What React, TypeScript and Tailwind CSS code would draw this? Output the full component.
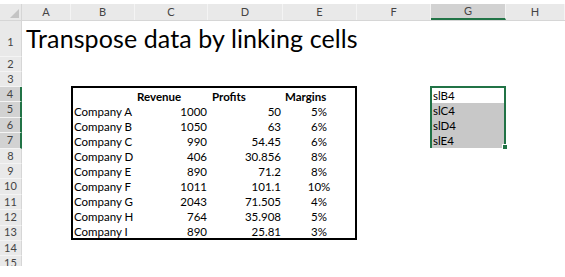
const cols = [
  { label: 'A', w: 'w-[49px]' },
  { label: 'B', w: 'w-[64px]' },
  { label: 'C', w: 'w-[73px]' },
  { label: 'D', w: 'w-[75px]' },
  { label: 'E', w: 'w-[74px]' },
  { label: 'F', w: 'w-[74px]' },
  { label: 'G', w: 'w-[75px]', active: true },
  { label: 'H', w: 'flex-1' },
]

const rows = [
  ['Company A', '1000', '50', '5%'],
  ['Company B', '1050', '63', '6%'],
  ['Company C', '990', '54.45', '6%'],
  ['Company D', '406', '30.856', '8%'],
  ['Company E', '890', '71.2', '8%'],
  ['Company F', '1011', '101.1', '10%'],
  ['Company G', '2043', '71.505', '4%'],
  ['Company H', '764', '35.908', '5%'],
  ['Company I', '890', '25.81', '3%'],
]

const rowHeads = [
  { n: 1, h: 'h-[36px]' },
  { n: 2, h: 'h-[15px]' },
  { n: 3, h: 'h-[15px]' },
  ...[4, 5, 6, 7, 8, 9, 10, 11, 12, 13, 14, 15].map((n) => ({ n, h: 'h-[15.4px]' })),
]

export default function App() {
  return (
    <div className="h-[277px] w-[565px] overflow-hidden bg-white font-['Lato','Liberation_Sans',sans-serif] text-[11px] text-black">
      <div className="h-[4px]" />
      <div className="h-[262px] overflow-hidden">
        {/* column headers */}
        <div className="flex h-[17px] border-b border-[#d6d6d6] bg-[#e9e9e9] text-[#444]">
          <div className="relative w-[22px] border-r border-[#d6d6d6]">
            <svg className="absolute bottom-[2px] right-[2px]" width="9" height="9" viewBox="0 0 9 9">
              <polygon points="9,0 9,9 0,9" fill="#c4c4c4" />
            </svg>
          </div>
          {cols.map((c) => (
            <div
              key={c.label}
              className={[
                c.w,
                'flex items-center justify-center border-r border-[#f4f4f4]',
                c.active ? 'border-b-2 border-b-[#217346] bg-[#d2d2d2]' : '',
              ].join(' ')}
            >
              {c.label}
            </div>
          ))}
        </div>

        <div className="flex">
          {/* row headers */}
          <div className="w-[22px] shrink-0 text-[#444]">
            {rowHeads.map((r) => {
              const active = r.n >= 4 && r.n <= 7
              return (
                <div
                  key={r.n}
                  className={[
                    r.h,
                    'flex items-center justify-center border-b border-[#f4f4f4]',
                    active
                      ? 'border-r-2 border-r-[#217346] bg-[#d2d2d2]'
                      : 'border-r border-r-[#d6d6d6] bg-[#e9e9e9]',
                  ].join(' ')}
                >
                  <span className={r.n === 1 ? 'mt-[8px]' : ''}>{r.n}</span>
                </div>
              )
            })}
          </div>

          {/* sheet */}
          <div className="flex-1">
            <div className="flex h-[36px] items-end pb-[6px] pl-[4px] text-[25px] leading-none tracking-[0.1px]">
              Transpose data by linking cells
            </div>
            <div className="h-[30px]" />

            <div className="flex">
              <div className="w-[49px] shrink-0" />

              <div className="-mt-px h-[154px] w-[286px] shrink-0 border-2 border-black text-[11.5px]">
                <div className="grid h-[15px] grid-cols-[62px_73px_75px_72px] items-center font-bold">
                  <div />
                  <div className="pl-[2px]">Revenue</div>
                  <div className="pl-[4px]">Profits</div>
                  <div className="pl-[2px]">Margins</div>
                </div>
                {rows.map((r) => (
                  <div
                    key={r[0]}
                    className="grid h-[15px] grid-cols-[62px_73px_75px_72px] items-center"
                  >
                    <div className="pl-[1px]">{r[0]}</div>
                    <div className="pr-[1px] text-right">{r[1]}</div>
                    <div className="pr-[2px] text-right">{r[2]}</div>
                    <div className="text-center">{r[3]}</div>
                  </div>
                ))}
              </div>

              <div className="w-[73px] shrink-0" />

              <div className="relative -mt-px h-[62px] w-[76px] shrink-0 border-2 border-[#217346] text-[11.5px]">
                <div className="flex h-[15px] items-center pl-[1px]">slB4</div>
                {['slC4', 'slD4', 'slE4'].map((t) => (
                  <div key={t} className="flex h-[15px] items-center bg-[#c8c8c8] pl-[1px]">
                    {t}
                  </div>
                ))}
                <div className="absolute -bottom-[4px] -right-[4px] h-[6px] w-[6px] border border-white bg-[#217346]" />
              </div>
            </div>
          </div>
        </div>
      </div>
    </div>
  )
}
